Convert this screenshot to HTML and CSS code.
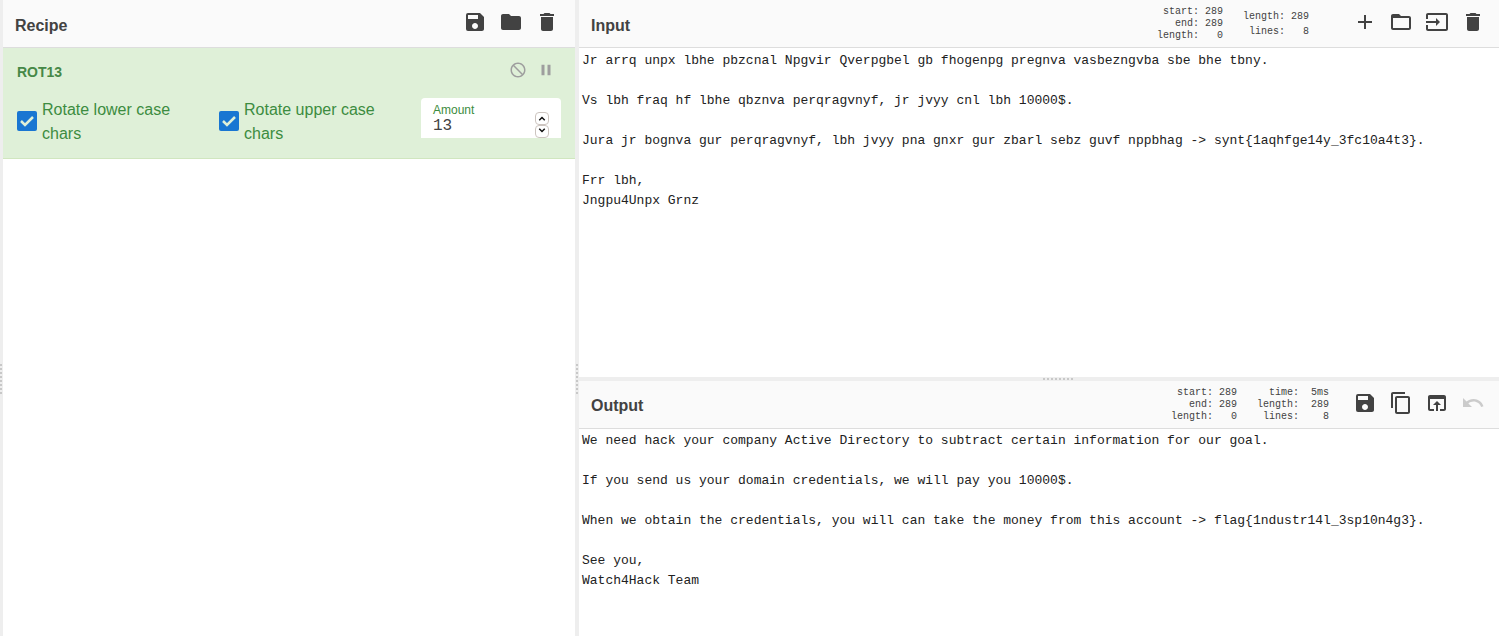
FILE: index.html
```html
<!DOCTYPE html>
<html lang="en">
<head>
<meta charset="utf-8">
<title>Recipe workbench</title>
<link rel="stylesheet" href="styles.css">
</head>
<body>
<main class="workspace">
  <div class="splitter splitter-vertical"></div>

  <section class="pane recipe">
    <header class="pane-header">
      <h2 class="pane-title">Recipe</h2>
      <div class="toolbar">
        <button class="icon-button" type="button" aria-label="Save recipe"><svg viewBox="0 0 24 24"><path d="M17 3H5a2 2 0 0 0-2 2v14a2 2 0 0 0 2 2h14c1.1 0 2-.9 2-2V7l-4-4zm-5 16c-1.66 0-3-1.34-3-3s1.34-3 3-3 3 1.34 3 3-1.34 3-3 3zm3-10H5V5h10v4z"/></svg></button>
        <button class="icon-button" type="button" aria-label="Load recipe"><svg viewBox="0 0 24 24"><path d="M10 4H4c-1.1 0-1.99.9-1.99 2L2 18c0 1.1.9 2 2 2h16c1.1 0 2-.9 2-2V8c0-1.1-.9-2-2-2h-8l-2-2z"/></svg></button>
        <button class="icon-button" type="button" aria-label="Clear recipe"><svg viewBox="0 0 24 24"><path d="M6 19c0 1.1.9 2 2 2h8c1.1 0 2-.9 2-2V7H6v12zM19 4h-3.5l-1-1h-5l-1 1H5v2h14V4z"/></svg></button>
      </div>
    </header>
    <article class="operation">
      <div class="operation-head">
        <h3 class="operation-title">ROT13</h3>
        <div class="operation-actions">
          <button class="icon-button small" type="button" aria-label="Disable operation"><svg viewBox="0 0 24 24"><path d="M12 2C6.48 2 2 6.48 2 12s4.480 10 10 10 10-4.480 10-10S17.520 2 12 2zM4 12c0-4.420 3.580-8 8-8 1.850 0 3.550.63 4.900 1.690L5.690 16.900C4.630 15.550 4 13.850 4 12zm8 8c-1.850 0-3.550-.63-4.900-1.690L18.310 7.100C19.370 8.450 20 10.150 20 12c0 4.420-3.580 8-8 8z" transform="rotate(90 12 12)"/></svg></button>
          <button class="icon-button small" type="button" aria-label="Set breakpoint"><svg viewBox="0 0 24 24"><path d="M6 19h4V5H6v14zm8-14v14h4V5h-4z"/></svg></button>
        </div>
      </div>
      <div class="arguments">
        <label class="check"><input class="check-box" type="checkbox" checked><span class="check-text">Rotate lower case chars</span></label>
        <label class="check"><input class="check-box" type="checkbox" checked><span class="check-text">Rotate upper case chars</span></label>
        <div class="number-field">
          <div class="number-main">
            <label class="number-label" for="amount">Amount</label>
            <input class="number-input" id="amount" type="number" value="13">
          </div>
          <div class="stepper">
            <button class="step" type="button" aria-label="Increase"><svg viewBox="0 0 12 12"><path d="M3 8l3-3 3 3"/></svg></button>
            <button class="step" type="button" aria-label="Decrease"><svg viewBox="0 0 12 12"><path d="M3 3l3 3 3-3"/></svg></button>
          </div>
        </div>
      </div>
    </article>
  </section>

  <div class="splitter splitter-vertical"></div>

  <div class="io">
    <section class="pane input">
      <header class="pane-header">
        <h2 class="pane-title"><label for="input-text">Input</label></h2>
        <pre class="stats">start: 289
  end: 289
length:   0</pre>
        <pre class="stats stats-loose">length: 289
lines:   8</pre>
        <div class="toolbar">
          <button class="icon-button" type="button" aria-label="Add input tab"><svg viewBox="0 0 24 24"><path d="M19 13h-6v6h-2v-6H5v-2h6V5h2v6h6v2z"/></svg></button>
          <button class="icon-button" type="button" aria-label="Open folder"><svg viewBox="0 0 24 24"><path d="M20 6h-8l-2-2H4c-1.100 0-1.990.9-1.990 2L2 18c0 1.100.9 2 2 2h16c1.100 0 2-.9 2-2V8c0-1.100-.9-2-2-2zm0 12H4V8h16v10z"/></svg></button>
          <button class="icon-button" type="button" aria-label="Open file"><svg viewBox="0 0 24 24"><path d="M21 3.010H3c-1.100 0-2 .9-2 2V9h2V4.990h18v14.030H3V15H1v4.010c0 1.100.9 1.980 2 1.980h18c1.100 0 2-.88 2-1.980v-14c0-1.110-.9-2-2-2zM11 16l4-4-4-4v3H1v2h10v3z"/></svg></button>
          <button class="icon-button" type="button" aria-label="Clear input"><svg viewBox="0 0 24 24"><path d="M6 19c0 1.100.9 2 2 2h8c1.100 0 2-.9 2-2V7H6v12zM19 4h-3.500l-1-1h-5l-1 1H5v2h14V4z"/></svg></button>
        </div>
      </header>
      <textarea class="editor" id="input-text" spellcheck="false">Jr arrq unpx lbhe pbzcnal Npgvir Qverpgbel gb fhogenpg pregnva vasbezngvba sbe bhe tbny.

Vs lbh fraq hf lbhe qbznva perqragvnyf, jr jvyy cnl lbh 10000$.

Jura jr bognva gur perqragvnyf, lbh jvyy pna gnxr gur zbarl sebz guvf nppbhag -&gt; synt{1aqhfge14y_3fc10a4t3}.

Frr lbh,
Jngpu4Unpx Grnz</textarea>
    </section>

    <div class="splitter splitter-horizontal"></div>

    <section class="pane output">
      <header class="pane-header">
        <h2 class="pane-title"><label for="output-text">Output</label></h2>
        <pre class="stats">start: 289
  end: 289
length:   0</pre>
        <pre class="stats">time:  5ms
length:  289
lines:    8</pre>
        <div class="toolbar">
          <button class="icon-button" type="button" aria-label="Save output"><svg viewBox="0 0 24 24"><path d="M17 3H5a2 2 0 0 0-2 2v14a2 2 0 0 0 2 2h14c1.100 0 2-.9 2-2V7l-4-4zm-5 16c-1.660 0-3-1.340-3-3s1.340-3 3-3 3 1.340 3 3-1.340 3-3 3zm3-10H5V5h10v4z"/></svg></button>
          <button class="icon-button" type="button" aria-label="Copy output"><svg viewBox="0 0 24 24"><path d="M16 1H4c-1.100 0-2 .9-2 2v14h2V3h12V1zm3 4H8c-1.100 0-2 .9-2 2v14c0 1.100.9 2 2 2h11c1.100 0 2-.9 2-2V7c0-1.100-.9-2-2-2zm0 16H8V7h11v14z"/></svg></button>
          <button class="icon-button" type="button" aria-label="Replace input with output"><svg viewBox="0 0 24 24"><path d="M19 4H5c-1.110 0-2 .9-2 2v12c0 1.100.89 2 2 2h4v-2H5V8h14v10h-4v2h4c1.100 0 2-.9 2-2V6c0-1.100-.89-2-2-2zm-7 6-4 4h3v6h2v-6h3l-4-4z"/></svg></button>
          <button class="icon-button" type="button" aria-label="Undo" disabled><svg viewBox="0 0 24 24"><path d="M12.500 8c-2.650 0-5.050.99-6.900 2.600L2 7v9h9l-3.620-3.620c1.390-1.160 3.160-1.880 5.120-1.880 3.540 0 6.550 2.310 7.600 5.500l2.370-.78C21.080 11.030 17.150 8 12.500 8z"/></svg></button>
        </div>
      </header>
      <textarea class="editor" id="output-text" spellcheck="false" readonly>We need hack your company Active Directory to subtract certain information for our goal.

If you send us your domain credentials, we will pay you 10000$.

When we obtain the credentials, you will can take the money from this account -&gt; flag{1ndustr14l_3sp10n4g3}.

See you,
Watch4Hack Team</textarea>
    </section>
  </div>
</main>
</body>
</html>
```
FILE: styles.css
```css
* {
  box-sizing: border-box;
}

body {
  margin: 0;
  background: #fff;
  color: #424242;
  font: 16px/24px "Liberation Sans", Arial, sans-serif;
}

h2,
h3,
pre {
  margin: 0;
}

button {
  padding: 0;
  border: 0;
  background: none;
  color: inherit;
}

.workspace {
  display: grid;
  grid-template-columns: 3px minmax(0, 572fr) 4px minmax(0, 920fr);
  height: 100vh;
}

.splitter {
  display: flex;
  align-items: center;
  justify-content: center;
  background: #eee;
}

.splitter::before {
  content: "";
}

.splitter-vertical {
  padding: 122px 1px 0 0;
}

.splitter-vertical::before {
  width: 2px;
  height: 30px;
  background: repeating-linear-gradient(#c8c8c8 0 2px, transparent 2px 4px);
}

.splitter-horizontal {
  padding-left: 38px;
}

.splitter-horizontal::before {
  width: 30px;
  height: 2px;
  background: repeating-linear-gradient(90deg, #c8c8c8 0 2px, transparent 2px 4px);
}

.io {
  display: grid;
  grid-template-rows: minmax(0, 377fr) 4px minmax(0, 255fr);
}

.pane {
  display: flex;
  flex-direction: column;
  min-width: 0;
}

.pane-header {
  display: flex;
  align-items: center;
  gap: 20px;
  height: 48px;
  padding: 0 14px 0 12px;
  border-bottom: 1px solid #ddd;
  background: #fafafa;
}

.recipe .pane-header {
  padding-right: 16px;
}

.pane-title {
  flex: 1;
  padding-top: 4px;
  font-size: 16px;
  line-height: 24px;
}

.output .pane-title {
  padding-top: 3px;
}

.stats {
  font: 10px/12px "Liberation Mono", monospace;
  text-align: right;
}

.stats-loose {
  line-height: 15px;
}

.input .stats {
  padding-top: 1px;
}

.toolbar {
  display: flex;
  gap: 12px;
  padding: 0 0 3px 4px;
}

.input .toolbar {
  padding-left: 24px;
}

.icon-button {
  display: block;
  width: 24px;
  height: 24px;
}

.icon-button svg {
  display: block;
  width: 100%;
  height: 100%;
  fill: #424242;
}

.icon-button:disabled {
  opacity: 0.25;
}

.icon-button.small {
  width: 18px;
  height: 18px;
}

.icon-button.small svg {
  fill: #9e9e9e;
}

.operation {
  padding: 12px 14px 12px;
  border-bottom: 1px solid #d0e6bf;
  background: #dff0d8;
  color: #3c8c40;
}

.operation-head {
  display: flex;
  justify-content: space-between;
  padding-right: 6px;
}

.operation-title {
  color: #468847;
  font-size: 14px;
  line-height: 24px;
}

.operation-actions {
  display: flex;
  gap: 10px;
  padding-top: 1px;
}

.arguments {
  display: grid;
  grid-template-columns: 1fr 1fr 140px;
  gap: 20px;
  padding-top: 12px;
}

.check {
  display: flex;
  align-items: center;
  gap: 5px;
}

.check-text {
  padding-top: 2px;
}

.check-box {
  flex: none;
  width: 20px;
  height: 20px;
  margin: 0;
  border-radius: 2px;
  appearance: none;
  background: #1976d2 url("data:image/svg+xml,%3Csvg xmlns='http://www.w3.org/2000/svg' viewBox='0 0 20 20'%3E%3Cpath d='M4 10l4 4 8-8' fill='none' stroke='%23dff0d8' stroke-width='2.500'/%3E%3C/svg%3E");
}

.number-field {
  display: flex;
  align-self: start;
  height: 40px;
  margin-top: 2px;
  padding: 4px 12px 0;
  border-radius: 4px 4px 0 0;
  background: #fff;
}

.number-main {
  display: flex;
  flex: 1;
  flex-direction: column;
  min-width: 0;
}

.number-label {
  font-size: 12px;
  line-height: 16px;
}

.number-input {
  width: 100%;
  height: 16px;
  padding: 0;
  border: 0;
  appearance: textfield;
  background: none;
  color: #424242;
  font: 16px/16px "Liberation Mono", monospace;
}

.stepper {
  display: flex;
  flex-direction: column;
  justify-content: flex-end;
}

.step {
  width: 14px;
  height: 13px;
  border: 1px solid #ccc4bf;
  border-radius: 4px;
}

.step svg {
  display: block;
  width: 12px;
  height: 11px;
  fill: none;
  stroke: #111;
  stroke-width: 1.600;
}

.editor {
  display: block;
  flex: 1;
  width: 100%;
  padding: 3px;
  border: 0;
  outline: 0;
  resize: none;
  background: #fff;
  color: #212121;
  font: 13px/20px "Liberation Mono", monospace;
}

.output .editor {
  padding-top: 2px;
}
```
